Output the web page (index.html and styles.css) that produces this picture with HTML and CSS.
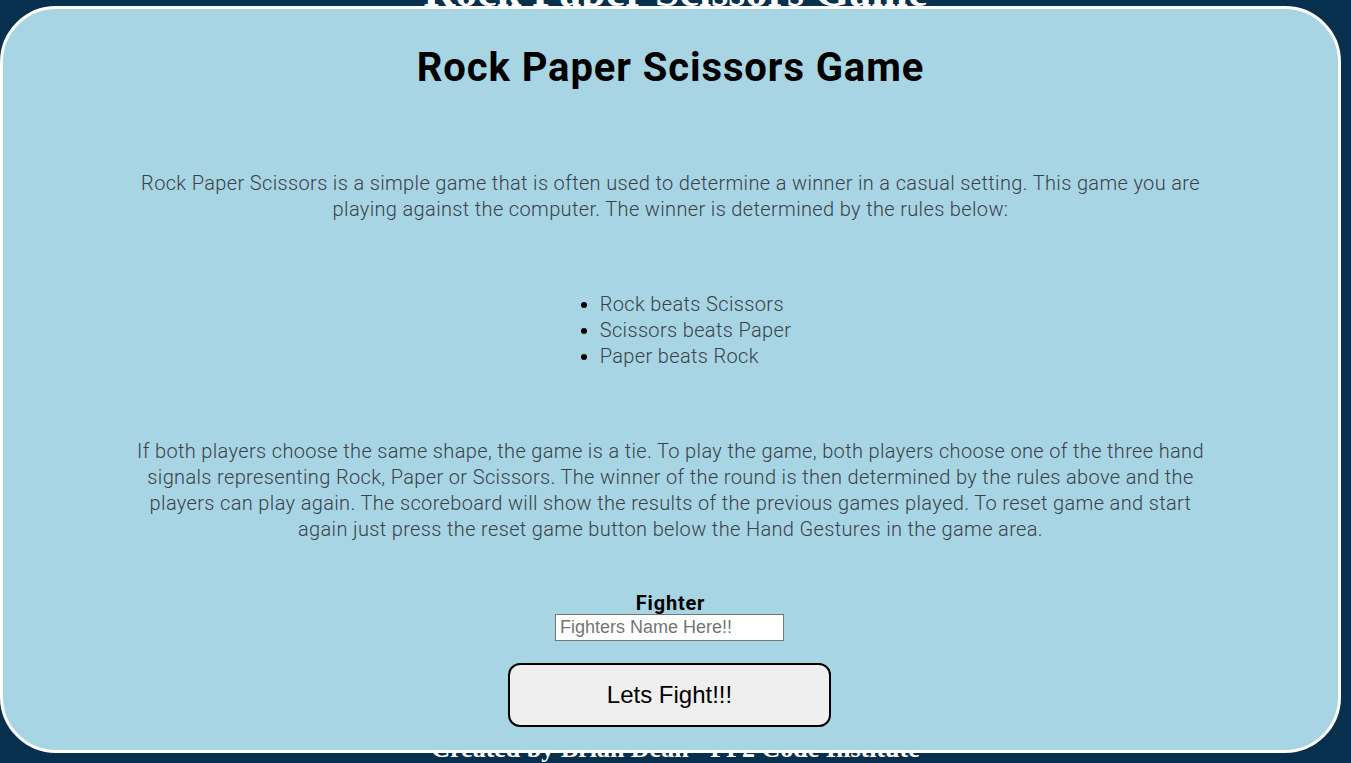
FILE: index.html
```html
<!DOCTYPE html>
<html lang="en">
<head>
<meta charset="utf-8">
<title>Rock Paper Scissors Game</title>
<link rel="stylesheet" href="styles.css">
</head>
<body>
  <div class="page">
    <h1 class="bg-title">Rock Paper Scissors Game</h1>
    <footer class="bg-footer">Created by Brian Dean - PP2 Code Institute</footer>
  </div>
  <section class="panel">
    <h1 class="title">Rock Paper Scissors Game</h1>
    <p class="text intro">Rock Paper Scissors is a simple game that is often used to determine a winner in a casual setting. This game you are playing against the computer. The winner is determined by the rules below:</p>
    <ul class="rules">
      <li><span>Rock beats Scissors</span></li>
      <li><span>Scissors beats Paper</span></li>
      <li><span>Paper beats Rock</span></li>
    </ul>
    <p class="text details">If both players choose the same shape, the game is a tie. To play the game, both players choose one of the three hand signals representing Rock, Paper or Scissors. The winner of the round is then determined by the rules above and the players can play again. The scoreboard will show the results of the previous games played. To reset game and start again just press the reset game button below the Hand Gestures in the game area.</p>
    <label class="fighter-label" for="fighter">Fighter</label>
    <input class="fighter-input" id="fighter" type="text" placeholder="Fighters Name Here!!">
    <button class="fight-btn" type="button">Lets Fight!!!</button>
  </section>
</body>
</html>
```
FILE: styles.css
```css
* { box-sizing: border-box; }

html, body {
  margin: 0;
  padding: 0;
  height: 100%;
}

body {
  background: #07304f;
  overflow: hidden;
}

.page {
  height: 763px;
  display: flex;
  flex-direction: column;
  align-items: center;
  justify-content: space-between;
  color: #ffffff;
  font-family: "Liberation Serif", "DejaVu Serif", serif;
  font-weight: bold;
}

.bg-title {
  margin: -31px 0 0 0;
  font-size: 44px;
  line-height: 46px;
}

.bg-footer {
  font-size: 26px;
  line-height: 28px;
  margin-bottom: 0;
}

.panel {
  position: absolute;
  top: 6px;
  left: 0;
  width: 1341px;
  height: 747px;
  background: #a8d5e3;
  border: 3px solid #ffffff;
  border-radius: 56px;
  display: flex;
  flex-direction: column;
  align-items: center;
  font-family: Roboto, "Noto Sans", sans-serif;
  color: #000;
}

.title {
  margin: 35px 0 0 0;
  font-size: 40px;
  line-height: 48px;
  font-weight: 700;
  letter-spacing: 0.9px;
}

.text {
  max-width: 1080px;
  margin: 0;
  text-align: center;
  font-size: 20px;
  line-height: 26px;
  font-weight: 300;
  letter-spacing: 0.35px;
  color: #3a4149;
}

.intro { margin-top: 78px; }

.rules {
  margin: 69px 0 0 0;
  padding: 0 0 0 50px;
  font-size: 20px;
  line-height: 26px;
  font-weight: 300;
  letter-spacing: 0.35px;
  color: #000;
}

.rules span { color: #3a4149; }

.details { margin-top: 69px; }

.fighter-label {
  margin-top: 49px;
  font-size: 20px;
  line-height: 24px;
  font-weight: 700;
  letter-spacing: 0.8px;
}

.fighter-input {
  width: 229px;
  height: 27px;
  margin: -1px 0 0 -2px;
  border: 1px solid #767676;
  background: #fff;
  padding: 1px 4px;
  font-family: "Liberation Sans", Arial, sans-serif;
  font-size: 18px;
}

.fighter-input::placeholder { color: #757575; }

.fight-btn {
  margin: 22px 0 0 -2px;
  width: 323px;
  height: 64px;
  border: 2px solid #000;
  border-radius: 12px;
  background: #efefef;
  font-family: "Liberation Sans", Arial, sans-serif;
  font-size: 24px;
  color: #000;
}
```
